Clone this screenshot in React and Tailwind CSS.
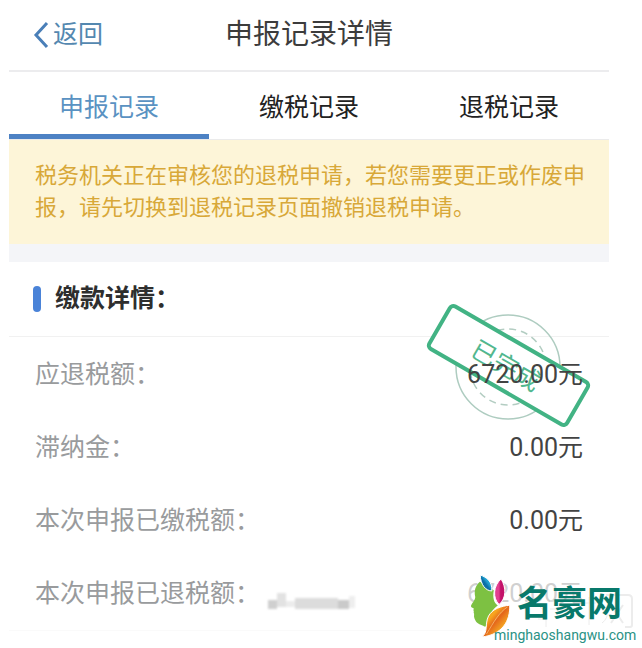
import React, { useState } from "react";

const TABS = ["申报记录", "缴税记录", "退税记录"];

export default function DeclarationDetailPage() {
    const [tab, setTab] = useState("申报记录");

    return (
        <div className="relative min-h-screen bg-white pl-[9px] pr-[33px] pb-5 font-['Roboto','Noto_Sans_CJK_SC',sans-serif]">
            {/* Header */}
            <header className="grid grid-cols-[1fr_auto_1fr] items-center h-[72px] px-6 border-b-2 border-[#ececee]">
                <button className="flex items-center gap-1 text-[25px] text-[#5488b0]">
                    <BackIcon />
                    返回
                </button>
                <h1 className="text-[28px] text-[#3c3c3c]">申报记录详情</h1>
            </header>

            {/* Tabs */}
            <nav className="grid grid-cols-3 border-b border-[#ebebeb]">
                {TABS.map(t => (
                    <button
                        key={t}
                        onClick={() => setTab(t)}
                        className={`h-[67px] pt-2.5 border-b-[5px] text-[25px] ${tab === t
                            ? "border-[#4d82c4] text-[#5a92c2]"
                            : "border-transparent text-[#222222]"
                            }`}
                    >
                        {t}
                    </button>
                ))}
            </nav>

            {/* Notice */}
            <p className="pl-[26px] pr-5 py-5 bg-[#fdf5d8] text-[22px] leading-8 text-[#d8a838]">
                税务机关正在审核您的退税申请，若您需要更正或作废申报，请先切换到退税记录页面撤销退税申请。
            </p>

            <div className="h-[18px] bg-[#f4f5f8]" />

            {/* Payment details */}
            <section className="border-b border-[#fafafa]">
                <h2 className="flex items-center gap-3.5 px-6 h-[75px] border-b border-[#f1f1f1] text-[25px] font-bold text-[#2e2e2e]">
                    <span className="w-2 h-[26px] rounded-full bg-[#4a83d8]" />
                    缴款详情：
                </h2>

                <dl className="pt-px">
                    <Row label="应退税额：" value="6720.00元" stamp />
                    <Row label="滞纳金：" value="0.00元" />
                    <Row label="本次申报已缴税额：" value="0.00元" />
                    <Row label="本次申报已退税额：" value="6720.00元" masked />
                </dl>
            </section>

            <SiteLogo />
        </div>
    );
}

/* ================= SUB COMPONENTS ================= */

function Row({ label, value, stamp, masked }) {
    return (
        <div className="relative flex items-center px-[26px] py-[18px] text-[25px] leading-[37px]">
            <dt className="text-[#999b9d]">{label}</dt>
            {masked && <MaskedNote />}
            {stamp && <DoneStamp />}
            <dd className="relative ml-auto text-[#434343]">{value}</dd>
        </div>
    );
}

function DoneStamp() {
    return (
        <div className="absolute right-[18px] -top-[38px] w-[166px] h-[130px] flex items-center justify-center">
            <svg viewBox="0 0 110 110" className="absolute w-[110px] h-[110px] mt-1" fill="none">
                <circle cx="55" cy="55" r="52" stroke="#aeccc0" strokeWidth="1.5" />
                <circle cx="55" cy="55" r="38" stroke="#b3cdc2" strokeWidth="1.5" strokeDasharray="7 5" />
            </svg>
            <div className="relative w-[163px] h-[53px] pt-1 pr-1 rotate-[30deg] flex items-center justify-center rounded-md border-4 border-[#42b384] bg-white text-[25px] text-[#52b78e]">
                已完成
            </div>
        </div>
    );
}

function MaskedNote() {
    return (
        <svg viewBox="0 0 90 20" className="w-[90px] h-5 ml-2 mt-4 blur-[1px]">
            <rect x="0" y="8" width="9" height="9" fill="#cfcfcf" />
            <rect x="9" y="1" width="9" height="14" fill="#e2e2e2" />
            <rect x="18" y="9" width="9" height="6" fill="#ececec" />
            <rect x="27" y="6" width="43" height="11" fill="#dcdcdc" />
            <rect x="70" y="8" width="11" height="9" fill="#cacaca" />
            <rect x="81" y="4" width="6" height="12" fill="#eeeeee" />
        </svg>
    );
}

function BackIcon() {
    return (
        <svg viewBox="0 0 16 28" className="w-4 h-7" fill="none" stroke="#4a7fb8" strokeWidth="3">
            <path d="M14 2 L3 14 L14 26" />
        </svg>
    );
}

function SiteLogo() {
    return (
        <a href="#" className="absolute right-0 top-[573px] w-[180px] h-[75px] bg-white/75">
            <svg viewBox="0 0 180 75" className="absolute inset-0" fill="none" stroke="#ececec">
                <path d="M78 34 l5 4 M76 46 h8 v8 M88 28 h26 M88 36 h26 M120 30 h14 M127 24 v28 M140 50 q6 -4 6 -14" />
                <path d="M144 22 h22 q4 0 4 4 v26 q0 2 -2 2 h-5 M149 32 l12 18 M161 32 l-12 18" strokeWidth="2" />
            </svg>
            <svg viewBox="66 39 160 200" className="absolute left-0 top-0 w-[53px] h-[67px]">
                <defs>
                    <linearGradient id="blueLeaf" x1="0" y1="1" x2="1" y2="0">
                        <stop offset="0.45" stopColor="#0b6fa6" />
                        <stop offset="0.6" stopColor="#22a3d2" />
                    </linearGradient>
                    <linearGradient id="pinkLeaf" x1="0" y1="0" x2="1" y2="0">
                        <stop offset="0.4" stopColor="#e23f8f" />
                        <stop offset="0.6" stopColor="#c3126a" />
                    </linearGradient>
                    <linearGradient id="orangeLeaf" x1="0" y1="0" x2="1" y2="1">
                        <stop offset="0.35" stopColor="#f7a51f" />
                        <stop offset="0.5" stopColor="#e4661b" />
                        <stop offset="0.7" stopColor="#f3a021" />
                    </linearGradient>
                </defs>
                <path d="M120 64 C106 76 102 92 106 110 C106 120 94 130 93 138 C94 143 101 142 102 146 C98 151 104 154 101 158 C105 162 100 168 104 176 C109 190 120 194 130 197 C136 202 140 200 142 190 C146 168 158 146 174 136 C162 128 158 112 162 90 Z" fill="#7dc142" />
                <path d="M121 44 C140 50 158 64 156 92 C138 92 122 74 121 44 Z" fill="url(#blueLeaf)" stroke="#fff" strokeWidth="3" />
                <path d="M184 56 C200 82 200 114 178 133 C158 114 160 76 184 56 Z" fill="url(#pinkLeaf)" stroke="#fff" strokeWidth="3" />
                <path d="M210 135 C212 182 188 224 126 231 C146 216 134 192 146 168 C158 146 184 138 210 135 Z" fill="url(#orangeLeaf)" stroke="#fff" strokeWidth="3" />
                <path d="M204 140 C178 156 162 186 140 222" fill="none" stroke="#fbd08a" strokeWidth="2" />
            </svg>
            <span className="absolute left-[55px] top-3 text-[35px] leading-[40px] font-bold text-[#08796b]">
                名豪网
            </span>
            <span className="absolute left-8 top-[52px] text-[14px] leading-5 text-[#2a9285]">
                minghaoshangwu.com
            </span>
        </a>
    );
}
